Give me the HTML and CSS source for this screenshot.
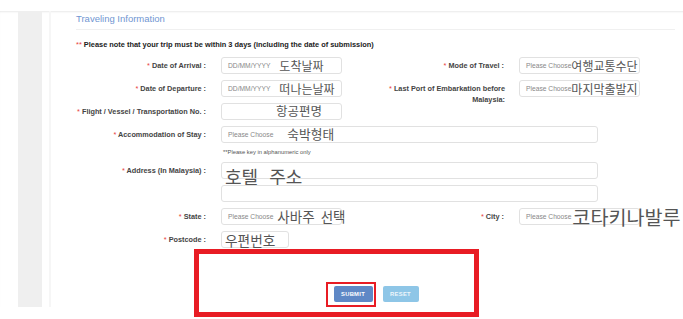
FILE: index.html
```html
<!DOCTYPE html>
<html lang="en">
<head>
    <meta charset="UTF-8">
    <meta name="viewport" content="width=device-width, initial-scale=1.0">
    <title>Traveling Information</title>
    <link rel="stylesheet" href="styles.css">
</head>
<body>
    <div class="page">
        <div class="sidebar"></div>

        <div class="main">
            <h2 class="section-title">Traveling Information</h2>
            <p class="trip-note"><span class="req">**</span> Please note that your trip must be within 3 days (including the date of submission)</p>

            <!-- Travel form -->
            <div class="form-grid">
                <label class="field-label"><span class="req">*</span> Date of Arrival :</label>
                <div class="input-box"><span class="ph">DD/MM/YYYY</span><span class="ko ko-arrival">도착날짜</span></div>
                <label class="field-label"><span class="req">*</span> Mode of Travel :</label>
                <div class="input-box"><span class="ph">Please Choose</span><span class="ko ko-tight">여행교통수단</span></div>

                <label class="field-label"><span class="req">*</span> Date of Departure :</label>
                <div class="input-box"><span class="ph">DD/MM/YYYY</span><span class="ko ko-arrival">떠나는날짜</span></div>
                <label class="field-label field-label-multi"><span class="req">*</span> Last Port of Embarkation before<br>Malaysia:</label>
                <div class="input-box"><span class="ph">Please Choose</span><span class="ko ko-tight">마지막출발지</span></div>

                <label class="field-label"><span class="req">*</span> Flight / Vessel / Transportation No. :</label>
                <div class="input-box"><span class="ko ko-flight">항공편명</span></div>
                <div class="span-rest"></div>

                <label class="field-label"><span class="req">*</span> Accommodation of Stay :</label>
                <div class="input-box input-wide"><span class="ph">Please Choose</span><span class="ko ko-stay">숙박형태</span></div>

                <div></div>
                <p class="hint">**Please key in alphanumeric only</p>

                <label class="field-label"><span class="req">*</span> Address (In Malaysia) :</label>
                <div class="input-box input-wide"><span class="ko ko-address">호텔 주소</span></div>

                <div></div>
                <div class="input-box input-wide"></div>

                <label class="field-label"><span class="req">*</span> State :</label>
                <div class="input-box"><span class="ph">Please Choose</span><span class="ko ko-state">사바주 선택</span></div>
                <label class="field-label"><span class="req">*</span> City :</label>
                <div class="input-box"><span class="ph">Please Choose</span><span class="ko ko-city">코타키나발루</span></div>

                <label class="field-label"><span class="req">*</span> Postcode :</label>
                <div class="input-box input-short"><span class="ko ko-post">우편번호</span></div>
            </div>

            <div class="actions">
                <button class="btn btn-submit">SUBMIT</button>
                <button class="btn btn-reset">RESET</button>
            </div>
        </div>
    </div>

    <!-- Highlight frames drawn over the screenshot -->
    <div class="callout callout-area"></div>
    <div class="callout callout-button"></div>
</body>
</html>
```

FILE: styles.css
```css
body {
    font-family: 'Liberation Sans', Arial, sans-serif;
    margin: 0;
    padding: 0;
    background-color: #fff;
    color: #333;
    position: relative;
    height: 319px;
    overflow: hidden;
}

.page {
    display: flex;
    margin-top: 11px;
    height: 296px;
    box-shadow: inset 0 2px 2px -1px rgba(0, 0, 0, 0.09);
    padding-left: 18px;
}

.sidebar {
    width: 24px;
    background-color: #efefef;
    margin-right: 7px;
}

.main {
    flex: 1;
    border-left: 2px solid #f6f6f6;
    padding: 2px 8px 0 25px;
}

.section-title {
    margin: 0;
    font-size: 9.5px;
    line-height: 12px;
    font-weight: normal;
    color: #7196d2;
    padding-bottom: 4px;
    border-bottom: 1px solid #f0f0f0;
}

.trip-note {
    margin: 10px 0 0;
    font-size: 7.4px;
    line-height: 9px;
    font-weight: bold;
    color: #222;
}

.req {
    color: #e8413c;
    font-weight: normal;
}

.form-grid {
    display: grid;
    grid-template-columns: 145px 121px 177px 121px;
    grid-template-rows: 17px 17px 17px 17px 7px 17px 17px 17px 17px;
    row-gap: 6px;
    margin-top: 8px;
}

.field-label {
    display: block;
    text-align: right;
    line-height: 17px;
    padding-right: 15px;
    font-size: 7.3px;
    font-weight: bold;
    color: #444;
    white-space: nowrap;
}

.field-label-multi {
    line-height: 11px;
    padding-top: 3px;
    padding-right: 14px;
}

.span-rest {
    grid-column: 3 / span 2;
}

.input-box {
    display: flex;
    align-items: center;
    border: 1px solid #e1e1e1;
    border-radius: 3px;
    background-color: #fff;
    padding-left: 6px;
    white-space: nowrap;
    overflow: visible;
}

.input-wide {
    grid-column: 2 / span 3;
    width: 377px;
    box-sizing: border-box;
}

.input-short {
    width: 68px;
    box-sizing: border-box;
}

.ph {
    font-size: 6.7px;
    color: #888;
}

.ko {
    font-family: 'Noto Sans CJK KR', sans-serif;
    color: #555;
    line-height: 1;
}

.ko-arrival {
    font-size: 12px;
    margin-left: 9px;
}

.ko-tight {
    font-size: 12px;
}

.ko-flight {
    font-size: 12.5px;
    margin-left: 48px;
}

.ko-stay {
    font-size: 12.7px;
    margin-left: 14px;
}

.ko-address {
    font-size: 18px;
    word-spacing: 7px;
    margin-left: -3px;
    padding-top: 11px;
}

.ko-state {
    font-size: 13.5px;
    word-spacing: 3px;
    margin-left: 4px;
}

.ko-city {
    font-size: 19.6px;
    margin-left: 1px;
}

.ko-post {
    font-size: 13.7px;
    margin-left: -3px;
    padding-top: 3px;
}

.hint {
    grid-column: 2 / span 3;
    margin: 0;
    padding-left: 2px;
    font-size: 5.8px;
    line-height: 7px;
    color: #555;
    white-space: nowrap;
}

.actions {
    display: flex;
    justify-content: center;
    gap: 10px;
    margin-top: 38px;
    padding-left: 1px;
}

.btn {
    height: 16px;
    border: none;
    border-radius: 2px;
    color: #fff;
    font-family: 'Liberation Sans', Arial, sans-serif;
    font-size: 5.8px;
    font-weight: bold;
    letter-spacing: 0.3px;
    padding: 0;
}

.btn-submit {
    width: 39px;
    background-color: #5f88c6;
}

.btn-reset {
    width: 36px;
    background-color: #8ec6e7;
    color: #eef6fb;
}

.callout {
    position: absolute;
    box-sizing: border-box;
    border-style: solid;
    border-color: #e81c24;
}

.callout-area {
    left: 194px;
    top: 249px;
    width: 285px;
    height: 68px;
    border-width: 5px;
}

.callout-button {
    left: 326px;
    top: 282px;
    width: 50px;
    height: 25px;
    border-width: 2px;
}
```
